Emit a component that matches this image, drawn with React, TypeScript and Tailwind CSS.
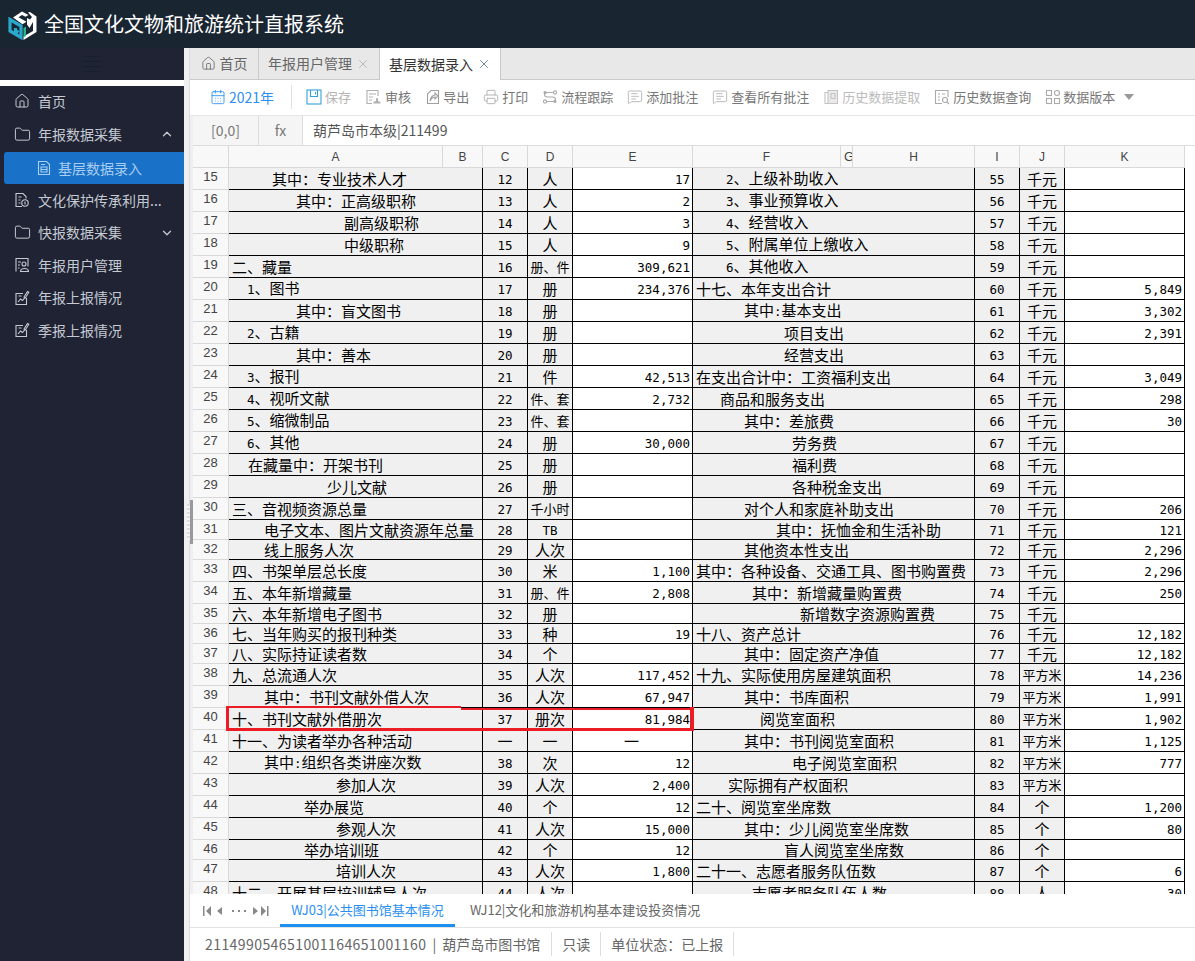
import React from "react";
import { CalendarDays, ChevronDown, ChevronUp, Folder, House, MessageSquareText, Printer, X } from "lucide-react";

type Row = [number, number, number, string, string, string, string, number, string, string, string, string];

// no, height, A indent, A text, C, D, E, F indent, F text, I, J, K
const rows: Row[] = [
  [15, 22, 43, "其中：专业技术人才", "12", "人", "17", 33, "2、上级补助收入", "55", "千元", ""],
  [16, 22, 67, "其中：正高级职称", "13", "人", "2", 33, "3、事业预算收入", "56", "千元", ""],
  [17, 22, 115, "副高级职称", "14", "人", "3", 33, "4、经营收入", "57", "千元", ""],
  [18, 22, 115, "中级职称", "15", "人", "9", 33, "5、附属单位上缴收入", "58", "千元", ""],
  [19, 22, 3, "二、藏量", "16", "册、件", "309,621", 33, "6、其他收入", "59", "千元", ""],
  [20, 22, 18, "1、图书", "17", "册", "234,376", 3, "十七、本年支出合计", "60", "千元", "5,849"],
  [21, 22, 67, "其中：盲文图书", "18", "册", "", 51, "其中:基本支出", "61", "千元", "3,302"],
  [22, 22, 18, "2、古籍", "19", "册", "", 91, "项目支出", "62", "千元", "2,391"],
  [23, 22, 67, "其中：善本", "20", "册", "", 91, "经营支出", "63", "千元", ""],
  [24, 22, 18, "3、报刊", "21", "件", "42,513", 3, "在支出合计中：工资福利支出", "64", "千元", "3,049"],
  [25, 22, 18, "4、视听文献", "22", "件、套", "2,732", 27, "商品和服务支出", "65", "千元", "298"],
  [26, 22, 18, "5、缩微制品", "23", "件、套", "", 51, "其中：差旅费", "66", "千元", "30"],
  [27, 22, 18, "6、其他", "24", "册", "30,000", 99, "劳务费", "67", "千元", ""],
  [28, 22, 19, "在藏量中：开架书刊", "25", "册", "", 99, "福利费", "68", "千元", ""],
  [29, 22, 98, "少儿文献", "26", "册", "", 99, "各种税金支出", "69", "千元", ""],
  [30, 22, 3, "三、音视频资源总量", "27", "千小时", "", 51, "对个人和家庭补助支出", "70", "千元", "206"],
  [31, 20, 35, "电子文本、图片文献资源年总量", "28", "TB", "", 83, "其中：抚恤金和生活补助", "71", "千元", "121"],
  [32, 20, 35, "线上服务人次", "29", "人次", "", 51, "其他资本性支出", "72", "千元", "2,296"],
  [33, 22, 3, "四、书架单层总长度", "30", "米", "1,100", 3, "其中：各种设备、交通工具、图书购置费", "73", "千元", "2,296"],
  [34, 22, 3, "五、本年新增藏量", "31", "册、件", "2,808", 59, "其中：新增藏量购置费", "74", "千元", "250"],
  [35, 20, 3, "六、本年新增电子图书", "32", "册", "", 107, "新增数字资源购置费", "75", "千元", ""],
  [36, 20, 3, "七、当年购买的报刊种类", "33", "种", "19", 3, "十八、资产总计", "76", "千元", "12,182"],
  [37, 20, 3, "八、实际持证读者数", "34", "个", "", 51, "其中：固定资产净值", "77", "千元", "12,182"],
  [38, 22, 3, "九、总流通人次", "35", "人次", "117,452", 3, "十九、实际使用房屋建筑面积", "78", "平方米", "14,236"],
  [39, 22, 35, "其中：书刊文献外借人次", "36", "人次", "67,947", 51, "其中：书库面积", "79", "平方米", "1,991"],
  [40, 22, 3, "十、书刊文献外借册次", "37", "册次", "81,984", 67, "阅览室面积", "80", "平方米", "1,902"],
  [41, 22, 3, "十一、为读者举办各种活动", "一", "一", "一", 51, "其中：书刊阅览室面积", "81", "平方米", "1,125"],
  [42, 22, 35, "其中:组织各类讲座次数", "38", "次", "12", 99, "电子阅览室面积", "82", "平方米", "777"],
  [43, 22, 107, "参加人次", "39", "人次", "2,400", 35, "实际拥有产权面积", "83", "平方米", ""],
  [44, 22, 75, "举办展览", "40", "个", "12", 3, "二十、阅览室坐席数", "84", "个", "1,200"],
  [45, 22, 107, "参观人次", "41", "人次", "15,000", 51, "其中：少儿阅览室坐席数", "85", "个", "80"],
  [46, 20, 75, "举办培训班", "42", "个", "12", 91, "盲人阅览室坐席数", "86", "个", ""],
  [47, 22, 107, "培训人次", "43", "人次", "1,800", 3, "二十一、志愿者服务队伍数", "87", "个", "6"],
  [48, 22, 3, "十二、开展基层培训辅导人次", "44", "人次", "", 59, "志愿者服务队伍人数", "88", "人", "30"],
];

function Mixed({ text }: { text: string }) {
  // ascii runs go in a mono face, the way the sheet's font draws them
  const parts = text.split(/([\x00-\x7f]+)/).filter(Boolean);
  return (
    <>
      {parts.map((p, i) =>
        /^[\x00-\x7f]/.test(p) ? (
          <span key={i} className="font-['DejaVu_Sans_Mono',monospace] text-[12.5px]">
            {p}
          </span>
        ) : (
          <span key={i}>{p}</span>
        )
      )}
    </>
  );
}

function Ico({ children, className = "" }: { children: React.ReactNode; className?: string }) {
  return (
    <svg viewBox="0 0 16 16" fill="none" stroke="currentColor" strokeWidth="1.1" className={`w-4 h-4 shrink-0 ${className}`}>
      {children}
    </svg>
  );
}

const DocIcon = () => (
  <Ico>
    <path d="M2.500 1.500h8l3 3v10h-11z" />
    <path d="M5 7h6v2.500H5zM5 9.500V12h6V9.500M5 4.500h4" />
  </Ico>
);
const ShieldDocIcon = () => (
  <Ico>
    <path d="M8 14.500H2v-13h7l3 3v2" />
    <circle cx="11" cy="11" r="3.200" />
    <path d="M11 9.500v3M4.500 5h3M4.500 8h2M4.500 11h2" />
  </Ico>
);
const UserDocIcon = () => (
  <Ico>
    <path d="M2 14.500v-13h12v8" />
    <circle cx="10" cy="7" r="2" />
    <path d="M6.500 14.500c0-4 8-4 8 0zM4 5h3M4 8h2M4 11h1.500" />
  </Ico>
);
const ReportIcon = () => (
  <Ico>
    <path d="M12.500 8v6.500H2V3.500H9" />
    <path d="M4 12l2.500-3 2 1.500 2.500-3M4.500 6h3" />
    <path d="M10 7l3.500-5.500 1.300.8L11.300 8z" />
  </Ico>
);

const SaveIcon = () => (
  <Ico className="text-[#35a0d8]">
    <rect x="1" y="1" width="14" height="14" />
    <path d="M4.500 1v6.500h7V1M9.500 3v2.500" />
  </Ico>
);
const AuditIcon = () => (
  <Ico>
    <path d="M13 7V1.500H2v13h5" />
    <path d="M4 5h7M4 8h4M4 11h3" />
    <path d="M8.500 14.500h7V13L13 12v-2a1 1 0 0 0-2 0v2l-2.500 1z" fill="currentColor" stroke="none" />
  </Ico>
);
const ExportIcon = () => (
  <Ico>
    <path d="M6 1.500h7.500v13h-11V5z" />
    <path d="M5 12c.5-3.500 2.500-5.500 5-6V4l3 3-3 3V8c-2 0-3.500 1.500-5 4z" />
  </Ico>
);
const FlowIcon = () => (
  <Ico>
    <circle cx="13" cy="3.500" r="1.600" />
    <circle cx="3" cy="12.500" r="1.600" />
    <circle cx="3" cy="3.500" r="1" fill="currentColor" />
    <circle cx="13" cy="12.500" r="1" fill="currentColor" />
    <path d="M11.400 3.500H5.500C1.500 3.500 1.500 8 5.500 8h5c4 0 4 4.500 0 4.500H4.600" />
  </Ico>
);
const FetchIcon = () => (
  <Ico>
    <path d="M5 1.500h9.500v13H5z" fill="currentColor" fillOpacity="0.35" />
    <path d="M5 3.500H2v11h8M8 4.500h4v5H8z" />
  </Ico>
);
const QueryIcon = () => (
  <Ico>
    <path d="M14 8V1.500H1.500v13H8" />
    <path d="M4 5h2M8 5h3M4 8h2M4 11h2" />
    <circle cx="11" cy="11" r="2.500" />
    <path d="M13 13l2 2" />
  </Ico>
);
const VersionIcon = () => (
  <Ico>
    <rect x="1.500" y="1.500" width="5" height="5" />
    <circle cx="12" cy="4" r="2.500" />
    <rect x="1.500" y="9.500" width="5" height="5" />
    <rect x="9.500" y="9.500" width="5" height="5" />
  </Ico>
);

function Logo() {
  return (
    <svg viewBox="0 0 29 31" className="w-[29px] h-[31px] shrink-0">
      <path d="M5 8.500L14 2.500l6.500 3.500-3 1.800L14 6 10.500 8.300l8 4.500-4 2.400z" fill="#fff" />
      <path d="M20 3.500l2-.5 6.500 4.500v15.500L15.500 31v-3.500L25 22V13l-3.500 6-2.500-3.500V9l3 1.500 2-2.500z" fill="#fff" />
      <path d="M2 10.500l11 6.500v11.500L2 22zM7.500 19v2.500l3 1.800" fill="none" stroke="#2aa7cc" strokeWidth="3.200" />
      <path d="M15.500 19l2.500-1.500V27l-2.500 1.500z" fill="#27b58c" />
    </svg>
  );
}

const navItems = [
  { label: "首页", icon: <House size={16} strokeWidth={1.5} />, h: "h-[30px]", gap: "gap-[8px]" },
  { label: "年报数据采集", icon: <Folder size={17} strokeWidth={1.4} />, h: "h-[36px]", gap: "gap-[7px]", arrow: "up" },
  { label: "基层数据录入", icon: <DocIcon />, h: "h-8", gap: "gap-[6px]", active: true },
  { label: "文化保护传承利用...", icon: <ShieldDocIcon />, h: "h-8", gap: "gap-[8px]" },
  { label: "快报数据采集", icon: <Folder size={17} strokeWidth={1.4} />, h: "h-[33px]", gap: "gap-[7px]", arrow: "down" },
  { label: "年报用户管理", icon: <UserDocIcon />, h: "h-8", gap: "gap-[8px]" },
  { label: "年报上报情况", icon: <ReportIcon />, h: "h-[33px]", gap: "gap-[8px]" },
  { label: "季报上报情况", icon: <ReportIcon />, h: "h-8", gap: "gap-[8px]" },
];

const tools = [
  { label: "保存", icon: <SaveIcon />, cls: "text-[#b5b5b5]", gap: "gap-[3px]" },
  { label: "审核", icon: <AuditIcon />, cls: "text-[#777]", iconCls: "text-[#b0b0b0]", gap: "gap-1" },
  { label: "导出", icon: <ExportIcon />, cls: "text-[#777]", iconCls: "text-[#a0a0a0]", gap: "gap-[2px]" },
  { label: "打印", icon: <Printer size={16} strokeWidth={1.3} />, cls: "text-[#777]", iconCls: "text-[#aaa]", gap: "gap-[3px]" },
  { label: "流程跟踪", icon: <FlowIcon />, cls: "text-[#777]", iconCls: "text-[#aaa]", gap: "gap-[3px]" },
  { label: "添加批注", icon: <MessageSquareText size={16} strokeWidth={1.2} />, cls: "text-[#777]", iconCls: "text-[#aaa]", gap: "gap-[3px]" },
  { label: "查看所有批注", icon: <MessageSquareText size={16} strokeWidth={1.2} />, cls: "text-[#777]", iconCls: "text-[#aaa]", gap: "gap-[3px]" },
  { label: "历史数据提取", icon: <FetchIcon />, cls: "text-[#bbb]", iconCls: "text-[#c4c4c4]", gap: "gap-[3px]" },
  { label: "历史数据查询", icon: <QueryIcon />, cls: "text-[#777]", iconCls: "text-[#aaa]", gap: "gap-[3px]" },
];

const headCls = "bg-[#f8f8f8] border-r border-b border-[#d9d9d9] font-normal text-[12px] text-[#444] font-['Liberation_Sans',sans-serif] text-center";
const lineCls = "border-r border-b border-black p-0 overflow-hidden whitespace-nowrap text-black";

function Sheet() {
  return (
    <div className="relative flex-1 min-h-0 overflow-hidden bg-white">
      <table className="table-fixed border-separate border-spacing-0 w-[992px] text-[15px] leading-none font-['Noto_Sans_CJK_SC',sans-serif]">
        <colgroup>
          <col className="w-[36px]" />
          <col className="w-[214px]" />
          <col className="w-[40px]" />
          <col className="w-[45px]" />
          <col className="w-[45px]" />
          <col className="w-[120px]" />
          <col className="w-[148px]" />
          <col className="w-[12px]" />
          <col className="w-[122px]" />
          <col className="w-[45px]" />
          <col className="w-[45px]" />
          <col className="w-[120px]" />
        </colgroup>
        <thead>
          <tr className="h-[22px]">
            <th className={headCls} />
            {["A", "B", "C", "D", "E", "F"].map((c) => (
              <th key={c} className={headCls}>{c}</th>
            ))}
            <th className={`${headCls} overflow-hidden !text-left !text-[13px] pl-[3px]`}>G</th>
            {["H", "I", "J", "K"].map((c) => (
              <th key={c} className={headCls}>{c}</th>
            ))}
          </tr>
        </thead>
        <tbody>
          {rows.map(([no, h, ai, a, c, d, e, fi, f, i, j, k]) => (
            <tr key={no} className={h === 22 ? "h-[22px]" : "h-[20px]"}>
              <td className="bg-[#f8f8f8] border-r border-b border-[#d9d9d9] p-0 pt-[1px] align-top text-center text-[13px] leading-[16px] text-[#444] font-['Liberation_Sans',sans-serif]">
                {no}
              </td>
              <td colSpan={2} className={`${lineCls} bg-[#f0f0f0]`} style={{ paddingLeft: ai }}>
                <Mixed text={a} />
              </td>
              <td className={`${lineCls} bg-[#f0f0f0] text-center`}>
                <Mixed text={c} />
              </td>
              <td className={`${lineCls} bg-[#f0f0f0] text-center ${d.length > 2 ? "text-[13px]" : ""}`}>
                <Mixed text={d} />
              </td>
              <td className={`${lineCls} bg-white pr-[2px] ${e === "一" ? "text-center" : "text-right"}`}>
                <Mixed text={e} />
              </td>
              <td colSpan={3} className={`${lineCls} bg-[#f0f0f0]`} style={{ paddingLeft: fi }}>
                <Mixed text={f} />
              </td>
              <td className={`${lineCls} bg-[#f0f0f0] text-center`}>
                <Mixed text={i} />
              </td>
              <td className={`${lineCls} bg-[#f0f0f0] text-center ${j.length > 2 ? "text-[13px]" : ""}`}>
                <Mixed text={j} />
              </td>
              <td className={`${lineCls} bg-white pr-[2px] text-right`}>
                <Mixed text={k} />
              </td>
            </tr>
          ))}
        </tbody>
      </table>

      {/* hand-drawn red box round row 40 */}
      <div className="absolute left-[33px] top-[560px] w-[235px] h-[2px] bg-[#ed1c24]" />
      <div className="absolute left-[268px] top-[562px] w-[233px] h-[2px] bg-[#ed1c24]" />
      <div className="absolute left-[33px] top-[560px] w-[3px] h-[25px] bg-[#ed1c24]" />
      <div className="absolute left-[497px] top-[561px] w-[4px] h-[24px] bg-[#ed1c24]" />
      <div className="absolute left-[33px] top-[582px] w-[468px] h-[3px] bg-[#ed1c24]" />
    </div>
  );
}

export default function App() {
  return (
    <div className="h-screen flex flex-col overflow-hidden bg-white font-['Noto_Sans_CJK_SC',sans-serif] text-[14px]">
      <header className="h-12 shrink-0 bg-[#1a2532] flex items-center pl-2 gap-[7px]">
        <Logo />
        <span className="text-white text-[20px] leading-none">全国文化文物和旅游统计直报系统</span>
      </header>

      <div className="relative flex flex-1 min-h-0">
        <aside className="w-[184px] shrink-0 flex flex-col bg-[#1f2333] text-[#c5c9d2]">
          <div className="h-8 flex flex-col items-center justify-center gap-1 shrink-0">
            <span className="w-[16px] h-px bg-[#171f2e]" />
            <span className="w-[16px] h-px bg-[#171f2e]" />
            <span className="w-[16px] h-px bg-[#171f2e]" />
            <span className="w-[16px] h-px bg-[#171f2e]" />
          </div>
          <div className="h-[6px] bg-white shrink-0" />
          {navItems.map((n) =>
            n.active ? (
              <div key={n.label} className={`${n.h} shrink-0 ml-1 pl-[32px] flex items-center ${n.gap} bg-[#1a72c8] rounded-l-[3px] text-[#a9cdf0]`}>
                {n.icon}
                <span>{n.label}</span>
              </div>
            ) : (
              <div key={n.label} className={`${n.h} shrink-0 pl-[14px] pr-[10px] flex items-center ${n.gap}`}>
                {n.icon}
                <span className="whitespace-nowrap">{n.label}</span>
                {n.arrow === "up" && <ChevronUp size={14} strokeWidth={2.2} className="ml-auto" />}
                {n.arrow === "down" && <ChevronDown size={14} strokeWidth={2.2} className="ml-auto" />}
              </div>
            )
          )}
        </aside>

        <div className="w-[6px] shrink-0 bg-[#f0f0f0] border-r border-[#dcdcdc]" />

        <main className="flex-1 min-w-0 flex flex-col bg-white">
          <div className="h-8 shrink-0 flex bg-[#e8e8e8] border-b border-[#c9c9c9] text-[#666]">
            <div className="w-[69px] flex items-center justify-center gap-[4px] border-r border-[#c9c9c9]">
              <House size={15} strokeWidth={1.3} />
              首页
            </div>
            <div className="w-[121px] flex items-center justify-center gap-[4px] border-r border-[#c9c9c9]">
              年报用户管理
              <X size={14} strokeWidth={1.5} className="text-[#b5b5b5]" />
            </div>
            <div className="w-[121px] h-8 flex items-center justify-center gap-[4px] bg-white border-r border-[#c9c9c9] text-[#333]">
              基层数据录入
              <X size={14} strokeWidth={1.5} className="text-[#5a7f9f]" />
            </div>
          </div>

          <div className="h-9 shrink-0 flex items-center pl-[20px] pb-[1px] border-b border-[#e6e6e6] whitespace-nowrap">
            <div className="flex items-center gap-[3px] text-[#2b90ef] pr-[17px] border-r border-[#e0e0e0] h-[24px]">
              <CalendarDays size={16} strokeWidth={1.3} />
              <span>2021年</span>
            </div>
            <div className="flex items-center gap-[14px] pl-[14px] text-[13px]">
              {tools.map((t) => (
                <div key={t.label} className={`flex items-center ${t.gap} ${t.cls}`}>
                  <span className={t.iconCls}>{t.icon}</span>
                  <span>{t.label}</span>
                </div>
              ))}
              <div className="flex items-center gap-[2px] text-[#777]">
                <span className="text-[#aaa]"><VersionIcon /></span>
                <span>数据版本</span>
                <span className="ml-[7px] w-0 h-0 border-x-[5px] border-x-transparent border-t-[6px] border-t-[#999]" />
              </div>
            </div>
          </div>

          <div className="flex-1 min-h-0 flex flex-col pl-[3px] bg-[#efefef]">
            <div className="h-[30px] shrink-0 flex items-center bg-white border-b border-[#dcdcdc] text-[#777]">
              <div className="w-[66px] h-full flex items-center justify-center bg-[#f5f5f5] border-r border-[#dcdcdc]">[0,0]</div>
              <div className="w-[44px] h-full flex items-center justify-center bg-[#f5f5f5] border-r border-[#dcdcdc]">fx</div>
              <div className="pl-[10px] text-[#555]">葫芦岛市本级|211499</div>
            </div>
            <Sheet />
          </div>

          <div className="h-[34px] shrink-0 flex items-stretch bg-white border-b border-[#e3e3e3] text-[#666] text-[13px]">
            <div className="w-[90px] pl-[13px] flex items-center gap-[5px] text-[#888]">
              <svg viewBox="0 0 66 10" className="w-[66px] h-[10px]" fill="currentColor">
                <path d="M0 0h1.500v10H0zM8 0v10L3 5zM19 1v8l-5-4zM29 4h2v2h-2zM35 4h2v2h-2zM41 4h2v2h-2zM50 1l5 4-5 4zM58 0l5 5-5 5zM64 0h1.500v10H64z" />
              </svg>
            </div>
            <div className="w-[175px] flex items-center justify-center border-b-[3px] border-[#1e90ef] text-[#2b90ef] pt-[2px]">WJ03|公共图书馆基本情况</div>
            <div className="ml-[15px] flex items-center pb-[1px]">WJ12|文化和旅游机构基本建设投资情况</div>
          </div>

          <div className="h-[33px] shrink-0 flex items-center pl-[15px] pb-[2px] bg-white text-[#666] whitespace-nowrap">
            <span className="pr-[11px] border-r border-[#ddd] leading-[24px]">
              <span className="tracking-[0.43px]">211499054651001164651001160</span>
              <span className="mx-[6px]">|</span>
              葫芦岛市图书馆
            </span>
            <span className="px-[10px] border-r border-[#ddd] leading-[24px]">只读</span>
            <span className="px-[10px] border-r border-[#ddd] leading-[24px]">单位状态：已上报</span>
          </div>
        </main>

        {/* sheet resize handle */}
        <div className="absolute left-[190px] top-[452px] w-[3px] h-[44px] bg-[#999]" />
        <div className="absolute left-[187px] top-[456px] w-[3px] h-[36px] bg-[repeating-linear-gradient(#ddd_0_2px,#f5f5f5_2px_4px)]" />
      </div>
    </div>
  );
}
